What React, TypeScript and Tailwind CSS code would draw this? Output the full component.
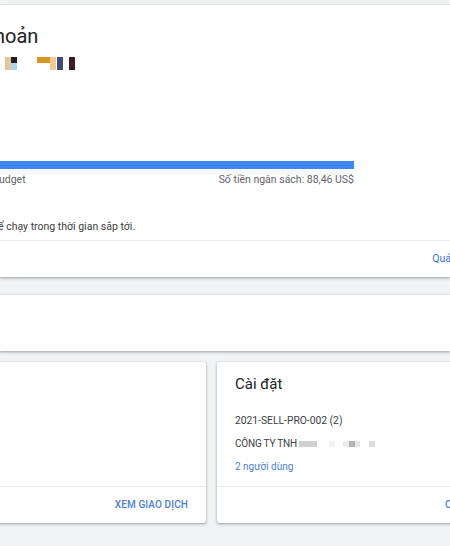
import React from 'react'

const font = { fontFamily: 'Roboto, "Noto Sans", Arial, sans-serif' }

function Mosaic() {
  // pixelated (blurred) account name under the title
  return (
    <div className="flex items-start h-[13px] mt-[7px]">
      <div className="ml-[5px] w-[6px] h-[13px] bg-[#e9c59c]" />
      <div className="w-[6px] h-[13px] flex flex-col">
        <div className="h-[6px] bg-[#1f1f1f]" />
        <div className="h-[7px] bg-[#a9d3f5]" />
      </div>
      <div className="ml-[20px] w-[13px] h-[6px] bg-[#d6961f]" />
      <div className="w-[6px] h-[13px] bg-[#f4c891]" />
      <div className="ml-[1px] w-[6px] h-[13px] bg-[#3b4d77]" />
      <div className="ml-[6px] w-[6px] h-[13px] bg-[#3a1c22]" />
    </div>
  )
}

function BlurredName() {
  return (
    <span className="inline-flex items-center h-[6px] align-middle">
      <span className="w-[18px] h-[6px] bg-[#cfcfcf]" />
      <span className="ml-[12px] w-[6px] h-[6px] bg-[#f0f0f0]" />
      <span className="ml-[8px] w-[6px] h-[6px] bg-[#ebebeb]" />
      <span className="w-[6px] h-[6px] bg-[#b3b3b3]" />
      <span className="w-[5px] h-[6px] bg-[#e6e6e6]" />
      <span className="ml-[9px] w-[6px] h-[6px] bg-[#dcdcdc]" />
    </span>
  )
}

const cardShadow =
  'shadow-[0_1px_2px_rgba(60,64,67,0.3),0_1px_3px_1px_rgba(60,64,67,0.15)]'

export default function App() {
  return (
    <div
      className="w-[450px] h-[546px] overflow-hidden bg-[#f1f3f4] pt-[5px] text-[#3c4043]"
      style={font}
    >
      {/* Account summary */}
      <div className={`bg-white ${cardShadow}`}>
        <div className="h-[235px] pt-[17px] overflow-hidden">
          <div className="text-[20px] leading-[28px] text-[#202124] -ml-[6px] whitespace-nowrap">
            hoản
          </div>
          <Mosaic />
          <div className="mt-[91px] w-[354px] h-[8px] bg-[#4285f4]" />
          <div className="mt-[4px] w-[354px] flex justify-between text-[10.5px] leading-[14px] text-[#5f6368]">
            <span className="-ml-[1px]">udget</span>
            <span>Số tiền ngân sách: 88,46 US$</span>
          </div>
          <div className="mt-[33px] text-[10.5px] leading-[14px] text-[#3c4043] -ml-[2px] whitespace-nowrap">
            ể chạy trong thời gian sắp tới.
          </div>
        </div>
        <div className="h-[37px] border-t border-[#e8eaed] flex items-center justify-end overflow-hidden">
          <span className="text-[10.5px] leading-[14px] text-[#3a6fd0] whitespace-nowrap -mr-[17px]">
            Quản lý
          </span>
        </div>
      </div>

      {/* Empty card */}
      <div className={`mt-[18px] h-[56px] bg-white ${cardShadow}`} />

      {/* Bottom row */}
      <div className="mt-[11px] flex gap-[11px]">
        <div className={`-ml-[8px] w-[214px] shrink-0 bg-white rounded-[3px] ${cardShadow}`}>
          <div className="h-[124px]" />
          <div className="h-[37px] border-t border-[#e8eaed] flex items-center justify-end pr-[18px]">
            <span className="text-[10px] leading-[14px] font-medium text-[#4a80dc] tracking-[0.1px]">
              XEM GIAO DỊCH
            </span>
          </div>
        </div>
        <div className={`w-[260px] shrink-0 bg-white rounded-[3px] ${cardShadow}`}>
          <div className="h-[124px] pt-[12px] pl-[18px]">
            <div className="text-[15px] leading-[20px] text-[#202124]">Cài đặt</div>
            <div className="mt-[20px] text-[10.3px] leading-[14px]">2021-SELL-PRO-002 (2)</div>
            <div className="mt-[9px] text-[10px] leading-[14px] whitespace-nowrap tracking-[-0.2px]">
              CÔNG TY TNH <BlurredName />
            </div>
            <div className="mt-[9px] text-[10px] leading-[14px] text-[#4a80dc]">2 người dùng</div>
          </div>
          <div className="h-[37px] border-t border-[#e8eaed] flex items-center pl-[228px] overflow-hidden">
            <span className="text-[10px] leading-[14px] font-medium text-[#4a80dc] whitespace-nowrap">
              CHỈNH SỬA
            </span>
          </div>
        </div>
      </div>
    </div>
  )
}
